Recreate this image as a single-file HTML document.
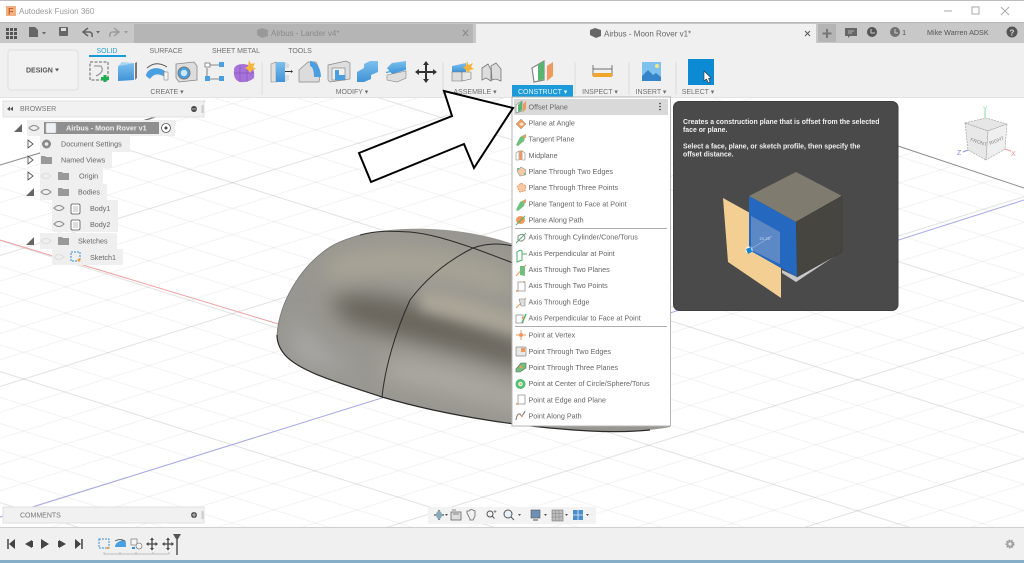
<!DOCTYPE html>
<html><head><meta charset="utf-8"><title>Autodesk Fusion 360</title>
<style>
html,body{margin:0;padding:0;background:#fff;width:1024px;height:563px;overflow:hidden}
svg{display:block;filter:blur(.3px)}
text{font-family:"Liberation Sans",sans-serif;font-size:7.2px;fill:#666}
.m text{fill:#666;font-size:7.2px}
.r text{font-size:7px;fill:#707070;text-anchor:middle}
.b text{font-size:7.2px;fill:#666}
</style></head><body>
<svg width="1024" height="563" viewBox="0 0 1024 563" xmlns="http://www.w3.org/2000/svg">
<defs>
<pattern id="ga" width="125" height="125" patternUnits="userSpaceOnUse" patternTransform="translate(0,240) rotate(17.5)">
<path d="M0 25H125M0 50H125M0 75H125M0 100H125" stroke="#f3f3f3" stroke-width="1"/><path d="M0 .5H125" stroke="#e2e2e2" stroke-width="1"/></pattern>
<pattern id="gb" width="125" height="125" patternUnits="userSpaceOnUse" patternTransform="translate(0,517) rotate(-17.4)">
<path d="M0 25H125M0 50H125M0 75H125M0 100H125" stroke="#f3f3f3" stroke-width="1"/><path d="M0 .5H125" stroke="#e2e2e2" stroke-width="1"/></pattern>
<linearGradient id="blue" x1="0" y1="0" x2="0" y2="1"><stop offset="0" stop-color="#7cc0ee"/><stop offset="1" stop-color="#3f93d6"/></linearGradient>
<filter id="bl" x="-30%" y="-30%" width="160%" height="160%"><feGaussianBlur stdDeviation="11"/></filter>
<filter id="bl2" x="-30%" y="-30%" width="160%" height="160%"><feGaussianBlur stdDeviation="6"/></filter>
<clipPath id="bodyc"><path d="M277 335C279 305 298 268 330 247C360 230 400 228 430 229C460 230 490 236 513 244L600 270L670 300V427C650 431 620 432 590 431C530 428 450 417 382 397C340 383 300 372 285 355C279 348 277 342 277 335Z"/></clipPath>
<clipPath id="gridc"><path d="M0 165L492 12L1024 188V563H0Z"/></clipPath>
</defs>

<!-- viewport -->
<rect x="0" y="98" width="1024" height="430" fill="#fff"/>
<g clip-path="url(#gridc)">
<rect x="0" y="98" width="1024" height="430" fill="url(#ga)"/>
<rect x="0" y="98" width="1024" height="430" fill="url(#gb)" style="mix-blend-mode:multiply"/>
</g>
<path d="M0 240L285 326" stroke="#f0a0a0" stroke-width="1"/>
<path d="M0 517L385 397M670 313L1024 200" stroke="#a8a8ea" stroke-width="1"/>
<path d="M898 146L1024 188" stroke="#8c8c8c" stroke-width="1"/>
<path d="M0 165L110 132L205 101" stroke="#8c8c8c" stroke-width="1"/>

<!-- body -->
<g clip-path="url(#bodyc)">
<rect x="270" y="225" width="400" height="210" fill="#989690"/>
<g filter="url(#bl)">
<path d="M325 262C370 240 430 245 510 272L510 296C440 272 370 268 330 285Z" fill="#aaa596"/>
<path d="M330 297C370 287 430 305 530 345L530 372C450 348 380 333 345 322Z" fill="#68645a"/>
<path d="M290 320C300 320 320 360 375 378L300 360Z" fill="#acacaa"/>
<path d="M385 358C430 358 470 372 530 395L530 412C470 400 430 388 385 380Z" fill="#acaaa2"/>
</g>
<g filter="url(#bl2)">
<path d="M420 290C460 293 500 308 520 318L520 335L420 310Z" fill="#aba597"/>
</g>
</g>
<path d="M277 335C277 342 279 348 285 355C300 372 340 383 382 397C450 417 530 428 590 431C610 432 630 432 650 430" fill="none" stroke="#2a2a2a" stroke-width="1.200"/>
<path d="M277 335C279 305 298 268 330 247C340 241 350 238 360 235" fill="none" stroke="#777" stroke-width=".8"/>
<path d="M360 235C378 230 395 231 410 232C432 234 452 241 473 248C487 253 500 258 513 263" fill="none" stroke="#2a2a2a" stroke-width="1"/>
<path d="M382 397C385 368 395 333 410 300C425 280 445 262 473 248C487 243 500 243 513 246" fill="none" stroke="#2a2a2a" stroke-width="1"/>

<!-- title bar -->
<rect x="0" y="0" width="1024" height="22" fill="#fff"/>
<rect x="0" y="0" width="1024" height="1" fill="#bdbdbd"/>
<rect x="6" y="6" width="10" height="10" fill="#f2b184"/>
<text x="8" y="14.500" style="font-size:9px;font-weight:bold;fill:#c8642a">F</text>
<text x="19" y="14" style="font-size:8px;fill:#9a9a9a">Autodesk Fusion 360</text>
<path d="M944 11H952" stroke="#aaa" stroke-width="1"/>
<rect x="972" y="7" width="7" height="7" fill="none" stroke="#aaa"/>
<path d="M1001 7L1009 15M1009 7L1001 15" stroke="#aaa"/>

<!-- tab bar -->
<rect x="0" y="22" width="1024" height="21" fill="#c8c8c8"/>
<rect x="0" y="22" width="1024" height="1" fill="#b8b8b8"/>
<rect x="134" y="24" width="339" height="19" fill="#b5b5b5"/>
<rect x="476" y="24" width="340" height="19" fill="#f0f0f0"/>
<rect x="818" y="24" width="18" height="18" fill="#b5b5b5"/>
<path d="M827 29V38M822.500 33.500H831.500" stroke="#777" stroke-width="2"/>
<g fill="#555"><rect x="6" y="28" width="3" height="3"/><rect x="10" y="28" width="3" height="3"/><rect x="14" y="28" width="3" height="3"/><rect x="6" y="32" width="3" height="3"/><rect x="10" y="32" width="3" height="3"/><rect x="14" y="32" width="3" height="3"/><rect x="6" y="36" width="3" height="3"/><rect x="10" y="36" width="3" height="3"/><rect x="14" y="36" width="3" height="3"/></g>
<path d="M29 27H35L38 30V37H29Z" fill="#666"/><path d="M42 32H46L44 34.500Z" fill="#666"/>
<rect x="59" y="27" width="9" height="9" rx="1" fill="#666"/><rect x="61" y="28" width="5" height="3" fill="#ddd"/>
<path d="M88 28L83 32L88 36M83 32H90Q93 33 92 37" fill="none" stroke="#666" stroke-width="1.600"/><path d="M96 31H100L98 33.500Z" fill="#666"/>
<path d="M114 28L119 32L114 36M119 32H112Q109 33 110 37" fill="none" stroke="#999" stroke-width="1.400"/><path d="M124 31H128L126 33.500Z" fill="#999"/>
<path d="M257 30L262 28L268 30V36L262 38L257 35Z" fill="#999"/>
<text x="271" y="36" style="font-size:8px;fill:#8a8a8a">Airbus - Lander v4*</text>
<path d="M463 30L468 36M468 30L463 36" stroke="#888" stroke-width="1"/>
<path d="M590 30L595 28L601 30V36L596 38L590 35Z" fill="#666"/>
<text x="604" y="36.500" style="font-size:8px;fill:#666">Airbus - Moon Rover v1*</text>
<path d="M805 31L810 36M810 31L805 36" stroke="#555" stroke-width="1"/>
<path d="M845 28H857V36H850L848 38V36H845Z" fill="#666"/><path d="M848 31H854M848 33H852" stroke="#ccc" stroke-width=".8"/>
<circle cx="872" cy="32" r="5" fill="#555"/><path d="M871 29V33H875" fill="none" stroke="#ccc" stroke-width="1"/>
<circle cx="895" cy="32" r="5" fill="#707070"/><path d="M895 29V33H898" fill="none" stroke="#ccc" stroke-width="1"/>
<text x="902" y="35" style="font-size:7.500px;fill:#555">1</text>
<text x="927" y="35" style="font-size:7.200px;fill:#555">Mike Warren ADSK</text>
<circle cx="1012" cy="32" r="5.500" fill="#555"/><text x="1009.500" y="35.500" style="font-size:8px;font-weight:bold;fill:#ddd">?</text>

<!-- ribbon -->
<rect x="0" y="43" width="1024" height="55" fill="#f0f0f0"/>
<rect x="0" y="97" width="1024" height="1" fill="#e3e3e3"/>
<rect x="8" y="50" width="70" height="40" rx="3" fill="#f2f2f2" stroke="#dedede"/>
<text x="26" y="72.500" style="font-size:7px;font-weight:bold;fill:#555">DESIGN</text><path d="M55 68.500H59L57 71.500Z" fill="#555"/>
<g class="r">
<text x="107" y="53" style="fill:#2a9bd8">SOLID</text>
<text x="166" y="53">SURFACE</text>
<text x="236" y="53">SHEET METAL</text>
<text x="300" y="53">TOOLS</text>
<text x="167" y="94">CREATE ▾</text>
<text x="352" y="94">MODIFY ▾</text>
<text x="475" y="94">ASSEMBLE ▾</text>
<text x="600" y="94">INSPECT ▾</text>
<text x="651" y="94">INSERT ▾</text>
<text x="698" y="94">SELECT ▾</text>
</g>
<rect x="89" y="55" width="37" height="2" fill="#1a9ad7"/>
<path d="M262 62V95M443 62V95M575 62V95M629 62V95M676 62V95" stroke="#dcdcdc"/>
<!-- sketch icon -->
<rect x="90" y="62" width="18" height="18" fill="none" stroke="#666" stroke-dasharray="3 1.500"/>
<path d="M94 66H101Q105 72 96 76" fill="none" stroke="#888"/>
<path d="M105 75V82M101 78.500H109" stroke="#1aae4e" stroke-width="3"/>
<!-- box -->
<path d="M118 66L134 63V80L118 81Z" fill="url(#blue)"/><path d="M122 62L134 63L118 66Z" fill="#a9d5f3"/><path d="M135 63L137 62V78L135 80Z" fill="#777"/>
<!-- revolve -->
<path d="M146 76C146 68 160 64 168 74L166 78C160 73 154 73 150 79Z" fill="#4a9fe0"/><path d="M147 68Q156 60 167 67" fill="none" stroke="#555"/><rect x="164" y="72" width="4" height="8" fill="#f5f5f5" stroke="#888" stroke-width=".6"/>
<!-- hole -->
<path d="M176 64L194 62L197 66V80L179 82L176 78Z" fill="#ddd" stroke="#888" stroke-width=".8"/><circle cx="184" cy="73" r="6" fill="#4a9fe0" stroke="#777"/><circle cx="184" cy="73" r="3.200" fill="#cfe7f8"/>
<!-- shape -->
<path d="M210 65H220M210 79H220M207 68V76" stroke="#666" stroke-width=".8"/><rect x="205" y="63" width="5" height="4" fill="#fff" stroke="#666" stroke-width=".7"/><rect x="219" y="62" width="5" height="5" fill="#4a9fe0"/><rect x="205" y="76" width="5" height="5" fill="#4a9fe0"/><rect x="219" y="76" width="5" height="5" fill="#4a9fe0"/>
<!-- form -->
<path d="M234 70Q234 64 244 64L252 66Q255 72 254 78Q248 83 240 82Q233 80 234 70Z" fill="#a773db"/><path d="M240 65V82M247 65V82M234 73H254" stroke="#8657bb" stroke-width=".7"/><path d="M249 60L251 64L255 63L253 67L256 69L252 70L250 73L248 70L245 68L248 66Z" fill="#f6b53d"/>
<!-- modify icons -->
<path d="M271 64L276 62L276 82L271 82Z" fill="#e0e0e0" stroke="#888" stroke-width=".6"/><path d="M276 62L285 62V82L276 82Z" fill="url(#blue)"/><path d="M285 62L289 64V68H285ZM285 75H289V80L285 82Z" fill="#ddd"/><path d="M285 71.500H291" stroke="#333"/><path d="M291 70L293 71.500L291 73Z" fill="#333"/>
<path d="M299 82V70L308 62H316Q321 71 319 82Z" fill="#dcdcdc" stroke="#888" stroke-width=".7"/><path d="M310 61C316 61 321 68 321 77H314C314 71 313 67 310 66Z" fill="#4a9fe0"/>
<path d="M328 65L346 61L350 63V79L330 82L328 80Z" fill="#dedede" stroke="#888" stroke-width=".7"/><rect x="332" y="68" width="13" height="12" fill="#f0f0f0" stroke="#777" stroke-width=".6"/><path d="M335 70H339V75H345V80H335Z" fill="#4a9fe0"/>
<path d="M357 72L364 68V64L370 61H378V72L371 75V79L364 82H357Z" fill="url(#blue)"/>
<path d="M387 68L392 63L406 61V70L392 74Z" fill="url(#blue)"/><path d="M386 72.500L406 68" stroke="#4a9fe0" stroke-width="1.200"/><path d="M387 75L406 71V78L397 82L387 80Z" fill="#dedede" stroke="#888" stroke-width=".6"/>
<path d="M426 63V81M417 72H435" stroke="#333" stroke-width="2"/><path d="M426 61L429 65H423ZM426 83L429 79H423ZM415 72L419 69V75ZM437 72L433 69V75Z" fill="#333"/>
<!-- assemble -->
<path d="M452 66L466 63V72H452Z" fill="url(#blue)"/><path d="M452 72H462V81H452Z" fill="#ddd" stroke="#777" stroke-width=".6"/><path d="M462 72H471V79L462 81Z" fill="#e8e8e8" stroke="#777" stroke-width=".6"/><path d="M467 61L468.500 65L473 63L471 67L474 69L470 70L468 73L466 70L463 67L466 66Z" fill="#f8b33a"/>
<path d="M482 68L488 64L491 70V81L486 78L482 80Z" fill="#ddd" stroke="#777" stroke-width=".8"/><path d="M491 66L496 63L501 69V81L496 79L492 80Z" fill="#ddd" stroke="#777" stroke-width=".8"/>
<!-- construct -->
<path d="M532 68L544 61V80L534 82Z" fill="#fff" stroke="#888" stroke-width="1.200"/><path d="M538 65L544 61V79L538 81Z" fill="#57b56f"/><path d="M547 66L553 62V76L547 81Z" fill="#ef9a5c"/>
<rect x="512" y="85" width="61" height="12" fill="#1d9ad9"/>
<text x="518" y="94" style="font-size:7px;fill:#e8f6ff">CONSTRUCT ▾</text>
<!-- inspect -->
<path d="M593 65V76M612 65V76M593 69H612" stroke="#444" stroke-width=".7"/><rect x="593" y="73" width="19" height="4" fill="#efa62c"/>
<!-- insert -->
<rect x="642" y="62" width="19" height="19" fill="#7ec0ee"/><path d="M642 81V76L648 70L653 75L656 73L661 77V81Z" fill="#3584c9"/><circle cx="657" cy="66" r="2" fill="#f5e68c"/>
<!-- select -->
<rect x="688" y="59" width="26" height="26" fill="#0d8ad4"/>
<path d="M704 71V81L706.500 79L708.500 83L710 82L708.500 78.500L711 78Z" fill="#fff" stroke="#333" stroke-width=".6"/>

<!-- browser -->
<rect x="3" y="101" width="201" height="16" fill="#f1f1f1" stroke="#e0e0e0"/>
<path d="M10 106.500L7 109L10 111ZM13 106.500L10 109L13 111Z" fill="#555"/>
<text x="20" y="111" style="font-size:7px;fill:#777">BROWSER</text>
<circle cx="194" cy="109" r="3" fill="#444"/><path d="M191.500 109H196.500" stroke="#ddd" stroke-width=".8"/>
<rect x="201.500" y="105" width="2" height="8" fill="#ccc"/>
<g fill="#efefef">
<rect x="27" y="120" width="148" height="16"/><rect x="40" y="136" width="90" height="16"/><rect x="40" y="152" width="72" height="16"/><rect x="40" y="168" width="63" height="16"/><rect x="40" y="184" width="67" height="16"/><rect x="52" y="200" width="66" height="16"/><rect x="52" y="216" width="66" height="16"/><rect x="40" y="233" width="77" height="16"/><rect x="52" y="249" width="71" height="16"/>
</g>
<rect x="44" y="122" width="115" height="12" fill="#8f8f8f"/>
<rect x="46" y="123" width="10" height="10" rx="1" fill="#eef1f3" stroke="#bbb" stroke-width=".5"/>
<g class="b">
<text x="66" y="130.500" style="font-weight:bold;fill:#efefef;font-size:7.200px">Airbus - Moon Rover v1</text>
<text x="61" y="146.500">Document Settings</text>
<text x="61" y="162.500">Named Views</text>
<text x="79" y="178.500">Origin</text>
<text x="78" y="194.500">Bodies</text>
<text x="90" y="211">Body1</text>
<text x="90" y="227">Body2</text>
<text x="78" y="243.500">Sketches</text>
<text x="90" y="260">Sketch1</text>
</g>
<circle cx="166" cy="128" r="4.500" fill="#fff" stroke="#555" stroke-width=".8"/><circle cx="166" cy="128" r="1.500" fill="#444"/>
<!-- triangles -->
<path d="M14 132L22 124V132Z" fill="#666"/><path d="M26 196L34 188V196Z" fill="#666"/><path d="M26 245L34 237V245Z" fill="#666"/>
<path d="M28 140L33 144L28 148Z M28 156L33 160L28 164Z M28 172L33 176L28 180Z" fill="#fff" stroke="#555" stroke-width=".9"/>
<!-- eyes -->
<g fill="none" stroke="#888" stroke-width="1"><path d="M29 128Q34 123 39 128Q34 133 29 128Z"/><path d="M41 192Q46 187 51 192Q46 197 41 192Z"/><path d="M54 208Q59 203 64 208Q59 213 54 208Z"/><path d="M54 224Q59 219 64 224Q59 229 54 224Z"/></g>
<g fill="none" stroke="#ddd" stroke-width="1"><path d="M41 176Q46 171 51 176Q46 181 41 176Z"/><path d="M41 241Q46 236 51 241Q46 246 41 241Z"/><path d="M54 257Q59 252 64 257Q59 262 54 257Z"/></g>
<g fill="#8a8a8a"><circle cx="46.500" cy="144" r="4.500"/></g><circle cx="46.500" cy="144" r="1.800" fill="#ececec"/>
<g fill="#999"><path d="M41 156H45L46 157H52V164H41Z"/><path d="M58 172H62L63 173H69V180H58Z"/><path d="M58 188H62L63 189H69V196H58Z"/><path d="M58 237H62L63 238H69V245H58Z"/></g>
<rect x="71" y="204" width="9" height="10" rx="1.500" fill="#fff" stroke="#555" stroke-width=".8"/><rect x="73" y="206" width="5" height="6" fill="#ddd"/>
<rect x="71" y="220" width="9" height="10" rx="1.500" fill="#fff" stroke="#555" stroke-width=".8"/><rect x="73" y="222" width="5" height="6" fill="#ddd"/>
<rect x="71" y="252" width="9" height="9" fill="none" stroke="#3a8fd2" stroke-dasharray="2 1"/><circle cx="79" cy="260" r="1.500" fill="#efa62c"/>

<!-- comments -->
<rect x="3" y="507" width="201" height="16" fill="#f1f1f1" stroke="#e0e0e0"/>
<text x="20" y="517.500" style="font-size:7px;fill:#777">COMMENTS</text>
<circle cx="194" cy="515" r="3" fill="#444"/><path d="M191.500 515H196.500M194 512.500V517.500" stroke="#ddd" stroke-width=".8"/>
<rect x="201.500" y="511" width="2" height="8" fill="#ccc"/>

<!-- nav bar -->
<rect x="428" y="507" width="168" height="17" fill="#f2f2f2" opacity=".9"/>
<path d="M434 515H444M439 510V520" stroke="#555" stroke-width="1.300"/><ellipse cx="439" cy="515" rx="3" ry="4" fill="#8ab"/><path d="M445 514H448L446.500 516Z" fill="#555"/>
<rect x="451" y="512" width="10" height="8" fill="#ddd" stroke="#666" stroke-width=".8"/><path d="M452 510H456M453 514H459" stroke="#666" stroke-width=".8"/>
<path d="M470 519L467 513V511H469L470 510L471.500 509.500L473 510L475 511V516L473 520H470Z" fill="#f0f0f0" stroke="#666" stroke-width=".8"/>
<circle cx="490" cy="514" r="3" fill="none" stroke="#555"/><path d="M492 516L494.500 518.500" stroke="#555"/><path d="M495 510V513M493.500 511.500H496.500" stroke="#555" stroke-width=".6"/>
<circle cx="508" cy="514" r="4" fill="#e8f2fa" stroke="#555"/><path d="M511 517L514 520" stroke="#555"/><path d="M518 514H521L519.500 516Z" fill="#555"/>
<rect x="531" y="510" width="9" height="8" fill="#6f8fb5" stroke="#555" stroke-width=".6"/><path d="M533 520H538" stroke="#555"/><path d="M544 514H547L545.500 516Z" fill="#555"/>
<rect x="552" y="510" width="11" height="11" fill="#bcbcbc" stroke="#777" stroke-width=".6"/><path d="M555.500 510V521M559 510V521M552 513.500H563M552 517H563" stroke="#888" stroke-width=".5"/><path d="M565 514H568L566.500 516Z" fill="#555"/>
<rect x="573" y="510" width="10" height="10" fill="#4a8fcc"/><path d="M578 510V520M573 515H583" stroke="#e5eef5" stroke-width=".8"/><path d="M586 514H589L587.500 516Z" fill="#555"/>

<!-- timeline -->
<rect x="0" y="527" width="1024" height="33" fill="#f0f0f0"/>
<rect x="0" y="527" width="1024" height="1" fill="#cfcfcf"/>
<rect x="0" y="560" width="1024" height="3" fill="#86aec8"/>
<path d="M8 539V549" stroke="#444" stroke-width="1.500"/><path d="M15 539V549L9 544Z" fill="#444"/>
<path d="M32 540V548L25 544Z" fill="#444"/><path d="M32 541H33V547H32Z" fill="#444"/>
<path d="M41 539L49 544L41 549Z" fill="#444"/>
<path d="M58 541H59V547H58ZM59 540L66 544L59 548Z" fill="#444"/>
<path d="M75 539L81 544L75 549Z" fill="#444"/><path d="M82 539V549" stroke="#444" stroke-width="1.500"/>
<rect x="99" y="539" width="10" height="9" fill="none" stroke="#3a8fd2" stroke-dasharray="2 1"/><circle cx="108" cy="548" r="1.200" fill="#efa62c"/>
<path d="M115 547C115 541 125 539 125 541C126 540 126 545 126 547Z" fill="#4a9fe0"/><path d="M115 541Q120 538 125 541" stroke="#666" fill="none"/>
<rect x="131" y="539" width="6" height="6" fill="#f5f5f5" stroke="#666" stroke-width=".6"/><circle cx="139" cy="546" r="3" fill="#f5f5f5" stroke="#666" stroke-width=".6"/><path d="M132 547H135V549H132Z" fill="#3a8fd2"/>
<path d="M152 539V549M147 544H157M168 539V549M163 544H173" stroke="#444" stroke-width="1.300"/>
<path d="M152 537.500L154 540H150ZM152 550.500L154 548H150ZM146 544L148.500 542V546ZM158 544L155.500 542V546ZM168 537.500L170 540H166ZM168 550.500L170 548H166ZM162 544L164.500 542V546ZM174 544L171.500 542V546Z" fill="#444"/>
<path d="M104 552V554H169V552M120 552V554M136 552V554M153 552V554" fill="none" stroke="#aaa" stroke-width=".7"/>
<path d="M173 534H181L178 539H176Z" fill="#555"/><path d="M177 538V555" stroke="#555" stroke-width="1.500"/>
<circle cx="1010" cy="544" r="3.500" fill="#aaa" stroke="#999" stroke-width="2" stroke-dasharray="1.500 1"/><circle cx="1010" cy="544" r="1.500" fill="#f0f0f0"/>

<!-- menu -->
<rect x="512" y="97" width="158.500" height="329" fill="#fff" stroke="#b5b5b5"/>
<rect x="514" y="99" width="154" height="16" fill="#d9d9d9"/>
<circle cx="660" cy="103.500" r=".8" fill="#333"/><circle cx="660" cy="106.500" r=".8" fill="#333"/><circle cx="660" cy="109.500" r=".8" fill="#333"/>
<path d="M515 228.500H667M515 326.500H667" stroke="#aeaeae"/>
<g class="m">
<text x="528.500" y="109.500">Offset Plane</text>
<text x="528.500" y="125.500">Plane at Angle</text>
<text x="528.500" y="141.500">Tangent Plane</text>
<text x="528.500" y="158">Midplane</text>
<text x="528.500" y="174">Plane Through Two Edges</text>
<text x="528.500" y="190">Plane Through Three Points</text>
<text x="528.500" y="206.500">Plane Tangent to Face at Point</text>
<text x="528.500" y="222.500">Plane Along Path</text>
<text x="528.500" y="239.500">Axis Through Cylinder/Cone/Torus</text>
<text x="528.500" y="256">Axis Perpendicular at Point</text>
<text x="528.500" y="272">Axis Through Two Planes</text>
<text x="528.500" y="288">Axis Through Two Points</text>
<text x="528.500" y="304.500">Axis Through Edge</text>
<text x="528.500" y="320.500">Axis Perpendicular to Face at Point</text>
<text x="528.500" y="337.500">Point at Vertex</text>
<text x="528.500" y="354">Point Through Two Edges</text>
<text x="528.500" y="370">Point Through Three Planes</text>
<text x="528.500" y="386">Point at Center of Circle/Sphere/Torus</text>
<text x="528.500" y="402.500">Point at Edge and Plane</text>
<text x="528.500" y="418.500">Point Along Path</text>
</g>
<!-- menu icons -->
<path d="M516 105L522 101V111L516 113Z" fill="#fff" stroke="#888" stroke-width=".7"/><path d="M518 105L522 101V110L518 112Z" fill="#57b56f"/><path d="M523 104L526 101V109L523 112Z" fill="#ef9a5c"/>
<path d="M516 124L521 119L526 124L521 129Z" fill="#ef9a5c" stroke="#999" stroke-width=".5"/><path d="M519 124L522 122L524 125L521 126Z" fill="#f6e1c9"/>
<path d="M516 145L520 137L526 134L524 141L518 146Z" fill="#6fc07d"/><path d="M522 137L526 134V138Z" fill="#ef9a5c"/>
<path d="M516 153L519 151V160L516 160Z M522 151L525 153V160L522 160Z" fill="#fff" stroke="#888" stroke-width=".6"/><path d="M519.500 151L522 150V160H519.500Z" fill="#ef9a5c"/>
<path d="M517 171L521 167L526 170L525 175L520 176Z" fill="#f3c9a6" stroke="#999" stroke-width=".6"/><circle cx="518" cy="169" r="1" fill="#4ab06a"/><circle cx="525" cy="174" r="1" fill="#4ab06a"/>
<path d="M517 187L521 183L526 186L525 191L520 192Z" fill="#f3c9a6" stroke="#e58a4c" stroke-width=".8" stroke-dasharray="2 1"/>
<path d="M516 210L520 202L526 199L524 206L518 211Z" fill="#6fc07d"/><path d="M522 202L526 199V203Z" fill="#ef9a5c"/>
<ellipse cx="520.500" cy="220" rx="4.500" ry="4" fill="#ef9a5c"/><path d="M516 225L525 216" stroke="#4ab06a"/>
<path d="M516 243L526 233" stroke="#4ab06a"/><path d="M518 236Q524 232 525 238Q522 243 518 240Z" fill="none" stroke="#888"/>
<path d="M517 252Q521 249 522 251V260L517 262Z" fill="#fff" stroke="#4ab06a"/><path d="M522 254H527" stroke="#4ab06a"/>
<path d="M516 276L526 265" stroke="#ef9a5c"/><path d="M520 266H525V276L520 275Z" fill="#6fc07d"/>
<rect x="518" y="282" width="7" height="9" fill="#fff" stroke="#888" stroke-width=".7"/><circle cx="517" cy="291" r="1" fill="#ef9a5c"/><circle cx="524" cy="282" r="1" fill="#ef9a5c"/>
<path d="M516 308L526 298" stroke="#ef9a5c"/><path d="M519 299H525V306L521 306Z" fill="#ddd" stroke="#888" stroke-width=".6"/>
<rect x="516" y="315" width="7" height="8" fill="#fff" stroke="#888" stroke-width=".7"/><path d="M522 323L526 314" stroke="#4ab06a" stroke-width="1.500"/><circle cx="523" cy="318" r="1.200" fill="#ef9a5c"/>
<path d="M521 330V340M516 335H526" stroke="#ef9a5c" stroke-width="1"/><circle cx="521" cy="335" r="2" fill="#ef9a5c"/>
<rect x="516" y="347" width="10" height="9" rx="1" fill="#e8e8e8" stroke="#888" stroke-width=".7"/><rect x="521" y="348" width="4" height="4" fill="#ef9a5c"/>
<path d="M516 369L521 363H526V368L520 372H516Z" fill="#6fc07d" stroke="#666" stroke-width=".6"/><circle cx="521" cy="367" r="1.500" fill="#ef9a5c"/>
<circle cx="520.500" cy="384" r="5" fill="#4fbf71"/><circle cx="520.500" cy="384" r="2.300" fill="#e9f6ec"/><circle cx="520.500" cy="384" r="1" fill="#ef9a5c"/>
<rect x="518" y="395" width="7" height="9" fill="#fff" stroke="#888" stroke-width=".7"/><circle cx="517" cy="404" r="1" fill="#ef9a5c"/>
<path d="M516 420Q517 413 520 414Q522 418 525 411" fill="none" stroke="#777"/><circle cx="522" cy="416" r="1.100" fill="#ef9a5c"/>

<!-- arrow -->
<path d="M444 91L513 108L474 168L464 144L371 182L359 153L452 116Z" fill="#fff" stroke="#000" stroke-width="2" stroke-linejoin="miter"/>

<!-- tooltip -->
<rect x="673.500" y="101.500" width="224.500" height="209" rx="6" fill="#4a4a4a" stroke="#3f3f3f"/>
<text x="683" y="124" style="font-size:6.900px;fill:#f0f0f0;font-weight:bold">Creates a construction plane that is offset from the selected</text>
<text x="683" y="132" style="font-size:6.900px;fill:#f0f0f0;font-weight:bold">face or plane.</text>
<text x="683" y="148.500" style="font-size:6.900px;fill:#f0f0f0;font-weight:bold">Select a face, plane, or sketch profile, then specify the</text>
<text x="683" y="156.500" style="font-size:6.900px;fill:#f0f0f0;font-weight:bold">offset distance.</text>
<path d="M838 251V254L796 282L782 273V270L797 277Z" fill="#c8c8c8"/>
<path d="M723 198L750 213V250L781 268V298L728 262Z" fill="#f4cf94"/>
<path d="M796 172L842 196L796 222L749 196Z" fill="#7f7b6f"/>
<path d="M842 196V252L797 277L796 222Z" fill="#47453f" stroke="#3a3a36" stroke-width=".6"/>
<path d="M749 196L796 222L797 277L749 250Z" fill="#2468bf"/>
<path d="M751 216L780 232V264L751 250Z" fill="#6a90c8" opacity=".8"/>
<text x="759" y="240" style="font-size:4.500px;fill:#b9cdea">15.30</text>
<path d="M749 250L772 236" stroke="#b9cdea" stroke-width=".5"/>
<circle cx="749" cy="250" r="3.500" fill="#fff"/><path d="M746 249L751 247L752 252L748 254Z" fill="#1586c9"/>

<!-- view cube -->
<path d="M965 123L986 118L1007 124L988 131Z" fill="#e6e6e6" stroke="#999" stroke-width=".6" stroke-dasharray="2 1"/>
<path d="M965 123L988 131L986 160L968 150Z" fill="#e8e8e8" stroke="#999" stroke-width=".6" stroke-dasharray="2 1"/>
<path d="M988 131L1007 124L1005 149L986 160Z" fill="#efefef" stroke="#999" stroke-width=".6" stroke-dasharray="2 1"/>
<text x="970" y="141" style="font-size:5px;fill:#888" transform="rotate(18 970 141)">FRONT</text>
<text x="990" y="145" style="font-size:5px;fill:#888" transform="rotate(-22 990 145)">RIGHT</text>
<path d="M985 118V110" stroke="#7fdca0" stroke-width="1"/><text x="983" y="111" style="font-size:6.500px;fill:#7fdca0">Y</text>
<path d="M968 150L963 152" stroke="#8f8fee"/><text x="957" y="155" style="font-size:7px;fill:#7f7fe8">Z</text>
<path d="M1005 149L1011 151" stroke="#f0a0a0"/><text x="1011" y="156" style="font-size:7px;fill:#ef9090">X</text>
</svg>
</body></html>
